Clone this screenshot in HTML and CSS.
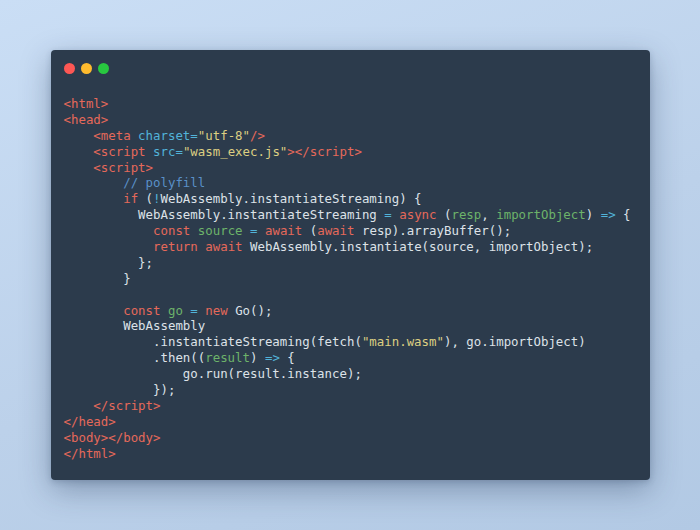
FILE: index.html
```html
<!DOCTYPE html>
<html>
<head>
<meta charset="utf-8">
<link rel="stylesheet" href="styles.css">
</head>
<body>
<div class="window">
  <div class="dots"><span class="dot red"></span><span class="dot yellow"></span><span class="dot green"></span></div>
  <div class="code">
<div class="ln"><span class="t">&lt;html&gt;</span></div>
<div class="ln"><span class="t">&lt;head&gt;</span></div>
<div class="ln i4"><span class="t">&lt;meta</span> <span class="a">charset</span><span class="o">=</span><span class="s">"utf-8"</span><span class="t">/&gt;</span></div>
<div class="ln i4"><span class="t">&lt;script</span> <span class="a">src</span><span class="o">=</span><span class="s">"wasm_exec.js"</span><span class="t">&gt;&lt;/script&gt;</span></div>
<div class="ln i4"><span class="t">&lt;script&gt;</span></div>
<div class="ln i8"><span class="c">// polyfill</span></div>
<div class="ln i8"><span class="k">if</span> (<span class="o">!</span>WebAssembly.instantiateStreaming) {</div>
<div class="ln i10">WebAssembly.instantiateStreaming <span class="o">=</span> <span class="k">async</span> (<span class="p">resp</span>, <span class="p">importObject</span>) <span class="o">=&gt;</span> {</div>
<div class="ln i12"><span class="k">const</span> <span class="p">source</span> <span class="o">=</span> <span class="k">await</span> (<span class="k">await</span> resp).arrayBuffer();</div>
<div class="ln i12"><span class="k">return</span> <span class="k">await</span> WebAssembly.instantiate(source, importObject);</div>
<div class="ln i10">};</div>
<div class="ln i8">}</div>
<div class="ln blank"></div>
<div class="ln i8"><span class="k">const</span> <span class="p">go</span> <span class="o">=</span> <span class="k">new</span> Go();</div>
<div class="ln i8">WebAssembly</div>
<div class="ln i12">.instantiateStreaming(fetch(<span class="s">"main.wasm"</span>), go.importObject)</div>
<div class="ln i12">.then((<span class="p">result</span>) <span class="o">=&gt;</span> {</div>
<div class="ln i16">go.run(result.instance);</div>
<div class="ln i12">});</div>
<div class="ln i4"><span class="t">&lt;/script&gt;</span></div>
<div class="ln"><span class="t">&lt;/head&gt;</span></div>
<div class="ln"><span class="t">&lt;body&gt;&lt;/body&gt;</span></div>
<div class="ln"><span class="t">&lt;/html&gt;</span></div>
  </div>
</div>
</body>
</html>
```

FILE: styles.css
```css
html, body {
  margin: 0;
  padding: 0;
  height: 100%;
}
body {
  background: linear-gradient(160deg, #cadef5 0%, #bcd1ea 55%, #b2c9e4 100%);
  display: flex;
  align-items: center;
  justify-content: center;
}
.window {
  width: 599px;
  height: 430px;
  box-sizing: border-box;
  background: #2c3b4c;
  border-radius: 4px;
  box-shadow: 0 10px 30px rgba(30, 50, 80, 0.35), 0 2px 6px rgba(30, 50, 80, 0.2);
  padding: 13px 13px 0 13px;
}
.dots {
  display: flex;
  gap: 6px;
  height: 11px;
}
.dot {
  width: 11px;
  height: 11px;
  border-radius: 50%;
}
.red { background: #fd5754; }
.yellow { background: #febb2e; }
.green { background: #28c840; }
.code {
  margin: 22px 0 0 0;
  font-family: "DejaVu Sans Mono", monospace;
  font-size: 12.4px;
  line-height: 15.9px;
  color: #dde2e8;
}
.ln {
  white-space: pre;
  height: 15.9px;
}
.i4 { padding-left: 4ch; }
.i8 { padding-left: 8ch; }
.i10 { padding-left: 10ch; }
.i12 { padding-left: 12ch; }
.i16 { padding-left: 16ch; }
.t { color: #e5695a; }
.a { color: #52b3d9; }
.o { color: #52b3d9; }
.s { color: #dccf82; }
.k { color: #e5695a; }
.p { color: #6db36a; }
.c { color: #5a90c8; }
```
